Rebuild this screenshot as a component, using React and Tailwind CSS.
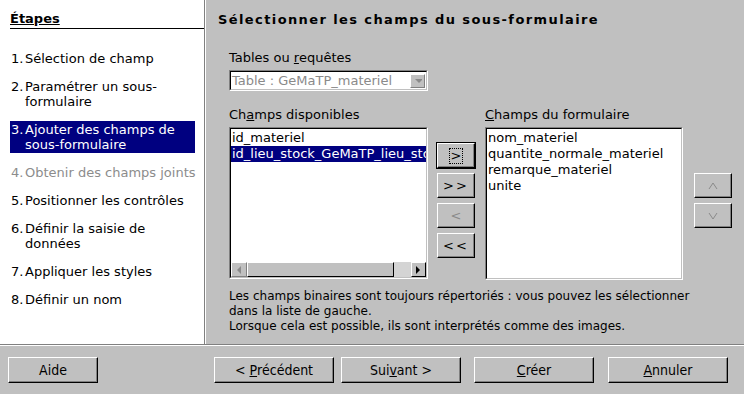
import React from "react";

const font = { fontFamily: '"DejaVu Sans", "Liberation Sans", sans-serif' };

function Btn({ children, className = "", disabled, focused }) {
  return (
    <div
      className={
        "flex items-center justify-center bg-[#c0c0c0] border-t border-l border-t-white border-l-white border-b border-r border-b-black border-r-black shadow-[inset_-1px_-1px_0_#808080] " +
        (focused ? "outline outline-1 outline-black " : "") +
        (disabled ? "text-[#8a8a8a] " : "text-black ") +
        className
      }
    >
      {children}
    </div>
  );
}

function Step({ n, children, active, disabled }) {
  return (
    <div
      className={
        "flex py-[1px] pl-[1px] leading-[15px] " +
        (active ? "bg-[#000080] text-white " : disabled ? "text-[#8c8c8c] " : "text-black ")
      }
    >
      <span className="w-[14px] shrink-0">{n}.</span>
      <span className={disabled ? "whitespace-nowrap" : ""}>{children}</span>
    </div>
  );
}

function Sunken({ className = "", children }) {
  return (
    <div
      className={
        "bg-white border border-t-[#808080] border-l-[#808080] border-b-white border-r-white " +
        className
      }
    >
      <div className="h-full w-full border-t border-l border-t-black border-l-black border-b border-r border-b-[#c0c0c0] border-r-[#c0c0c0] overflow-hidden">
        {children}
      </div>
    </div>
  );
}

function Arrow({ dir, color = "#000" }) {
  const pts = dir === "left" ? "6,2 2,6 6,10" : dir === "right" ? "2,2 6,6 2,10" : "2,4 10,4 6,8";
  return (
    <svg width="9" height="12" viewBox="0 0 9 12">
      <polygon points={pts} fill={color} />
    </svg>
  );
}

export default function App() {
  return (
    <div className="w-[744px] h-[394px] bg-[#c0c0c0] flex flex-col text-[13px] overflow-hidden" style={font}>
      <div className="flex h-[344px]">
        <div className="w-[204px] bg-white pl-[10px] flex flex-col">
          <div className="pt-[11px] h-[29px] border-b border-black font-bold underline leading-[16px]">
            Étapes
          </div>
          <div className="flex flex-col gap-[11px] pt-[21px] w-[185px]">
            <Step n="1">Sélection de champ</Step>
            <Step n="2">Paramétrer un sous-formulaire</Step>
            <Step n="3" active>Ajouter des champs de sous-formulaire</Step>
            <Step n="4" disabled>Obtenir des champs joints</Step>
            <Step n="5">Positionner les contrôles</Step>
            <Step n="6">Définir la saisie de données</Step>
            <Step n="7">Appliquer les styles</Step>
            <Step n="8">Définir un nom</Step>
          </div>
        </div>
        <div className="w-[1px] bg-[#808080]" />
        <div className="w-[1px] bg-white" />
        <div className="flex-1 flex flex-col pl-[12px] pt-[12px]">
          <div className="font-bold leading-[16px] tracking-[1.4px]">Sélectionner les champs du sous-formulaire</div>
          <div className="pl-[11px] flex flex-col">
            <div className="mt-[22px] leading-[16px]">
              Tables ou <span className="underline">r</span>equêtes
            </div>
            <Sunken className="mt-[4px] w-[199px] h-[21px]">
              <div className="flex items-center h-full pl-[1px] pr-[1px] text-[#8a8a8a]">
                <span className="flex-1 leading-[16px]">Table : GeMaTP_materiel</span>
                <div className="w-[15px] h-[14px] flex items-center justify-center bg-[#c0c0c0] border-t border-l border-t-white border-l-white border-b border-r border-b-[#808080] border-r-[#808080]">
                  <Arrow dir="down" color="#8a8a8a" />
                </div>
              </div>
            </Sunken>
            <div className="flex mt-[16px]">
              <div className="flex flex-col">
                <div className="leading-[16px]">
                  Ch<span className="underline">a</span>mps disponibles
                </div>
                <Sunken className="mt-[4px] w-[199px] h-[152px]">
                  <div className="flex flex-col h-full">
                    <div className="flex-1 leading-[16px] whitespace-nowrap pt-[1px] overflow-hidden">
                      <div className="px-[1px]">id_materiel</div>
                      <div className="px-[1px] bg-[#000080] text-white">id_lieu_stock_GeMaTP_lieu_stock</div>
                    </div>
                    <div className="h-[15px] flex bg-[#d4d4d4]">
                      <div className="w-[16px] flex items-center justify-center bg-[#c0c0c0] border-t border-l border-t-white border-l-white border-b border-r border-b-[#808080] border-r-[#808080]">
                        <Arrow dir="left" color="#8a8a8a" />
                      </div>
                      <div className="w-[147px] bg-[#c0c0c0] border-t border-l border-t-white border-l-white border-b border-r border-b-black border-r-black" />
                      <div className="flex-1" />
                      <div className="w-[15px] flex items-center justify-center bg-[#c0c0c0] border-t border-l border-t-white border-l-white border-b border-r border-b-black border-r-black">
                        <Arrow dir="right" />
                      </div>
                    </div>
                  </div>
                </Sunken>
              </div>
              <div className="flex flex-col gap-[5px] pt-[36px] ml-[9px] w-[38px]">
                <Btn className="h-[25px]" focused>
                  <span className="border border-dotted border-black px-[1px] leading-[14px]">&gt;</span>
                </Btn>
                <Btn className="h-[25px] tracking-[2px]">&gt;&gt;</Btn>
                <Btn className="h-[25px]" disabled>&lt;</Btn>
                <Btn className="h-[25px] tracking-[2px]">&lt;&lt;</Btn>
              </div>
              <div className="flex flex-col ml-[10px]">
                <div className="leading-[16px]">
                  <span className="underline">C</span>hamps du formulaire
                </div>
                <Sunken className="mt-[4px] w-[198px] h-[153px]">
                  <div className="leading-[16px] whitespace-nowrap pt-[1px] px-[1px]">
                    <div>nom_materiel</div>
                    <div>quantite_normale_materiel</div>
                    <div>remarque_materiel</div>
                    <div>unite</div>
                  </div>
                </Sunken>
              </div>
              <div className="flex flex-col gap-[5px] pt-[66px] ml-[11px] w-[38px]">
                <Btn className="h-[25px]" disabled>
                  <svg width="10" height="8" viewBox="0 0 10 8"><polyline points="1,7 5,1 9,7" fill="none" stroke="#8a8a8a" strokeWidth="1" /></svg>
                </Btn>
                <Btn className="h-[25px]" disabled>
                  <svg width="10" height="8" viewBox="0 0 10 8"><polyline points="1,1 5,7 9,1" fill="none" stroke="#8a8a8a" strokeWidth="1" /></svg>
                </Btn>
              </div>
            </div>
            <div className="mt-[9px] leading-[15px] text-[12px]">
              Les champs binaires sont toujours répertoriés : vous pouvez les sélectionner
              <br />
              dans la liste de gauche.
              <br />
              Lorsque cela est possible, ils sont interprétés comme des images.
            </div>
          </div>
        </div>
      </div>
      <div className="h-[1px] bg-[#808080]" />
      <div className="h-[1px] bg-white" />
      <div className="flex pt-[11px] pl-[8px] text-[14px]" style={{ fontFamily: '"DejaVu Sans Condensed", "DejaVu Sans", sans-serif' }}>
        <Btn className="w-[90px] h-[26px]">Aide</Btn>
        <Btn className="w-[120px] h-[26px] ml-[116px]">
          &lt;&nbsp;<span className="underline">P</span>récédent
        </Btn>
        <Btn className="w-[120px] h-[26px] ml-[7px]">
          Sui<span className="underline">v</span>ant &gt;
        </Btn>
        <Btn className="w-[120px] h-[26px] ml-[13px]">
          <span className="underline">C</span>réer
        </Btn>
        <Btn className="w-[120px] h-[26px] ml-[14px]">
          <span className="underline">A</span>nnuler
        </Btn>
      </div>
    </div>
  );
}
